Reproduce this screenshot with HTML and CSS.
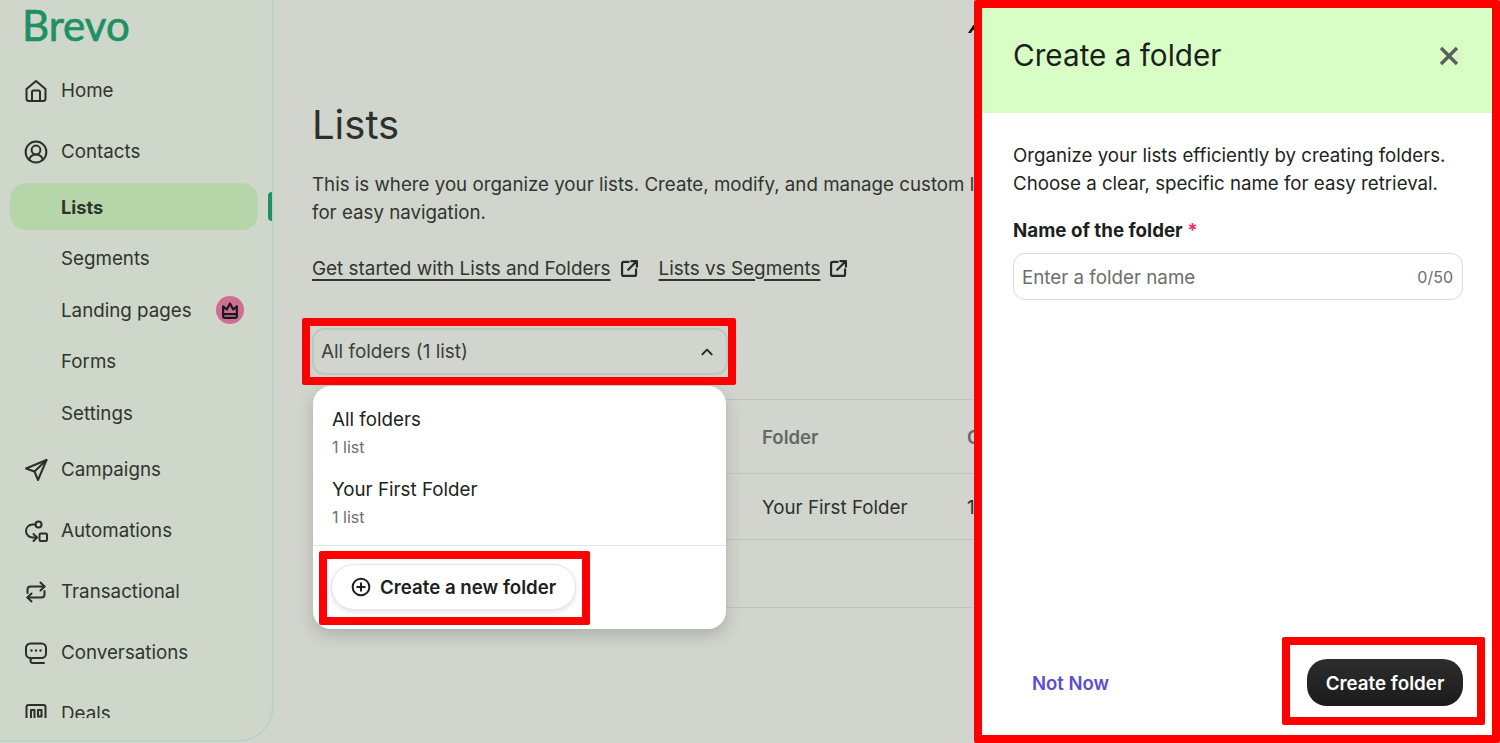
FILE: index.html
```html
<!DOCTYPE html>
<html lang="en">
<head>
<meta charset="utf-8">
<title>Brevo Lists</title>
<link rel="stylesheet" href="styles.css">
</head>
<body>
<div class="app">
  <aside class="sidebar">
    <div class="logo">Brevo</div>
    <nav class="nav">
      <a class="item"><svg class="ico" viewBox="0 0 24 24"><path d="M2.500 10 12 2l9.500 8v9.500a2.500 2.500 0 0 1-2.500 2.500H5a2.500 2.500 0 0 1-2.500-2.500z"/><path d="M8 22v-9a1.500 1.500 0 0 1 1.500-1.500h5A1.500 1.500 0 0 1 16 13v9"/></svg>Home</a>
      <a class="item item-contacts"><svg class="ico" viewBox="0 0 24 24"><circle cx="12" cy="12" r="10.400"/><circle cx="12" cy="10" r="4.400"/><path d="M5.200 19.800c.8-3.300 3.300-5.300 6.800-5.300s6 2 6.800 5.300"/></svg>Contacts</a>
      <div class="active-row"><a class="sub active">Lists</a><span class="marker"></span></div>
      <a class="sub">Segments</a>
      <a class="sub">Landing pages<span class="crown"><svg viewBox="0 0 24 24"><path d="M4.500 8v10.500a2 2 0 0 0 2 2h11a2 2 0 0 0 2-2V8l-4 3.500L12 5l-3.500 6.500z"/><path d="M4.500 16.500h15"/></svg></span></a>
      <a class="sub">Forms</a>
      <a class="sub">Settings</a>
      <a class="item"><svg class="ico" viewBox="0 0 24 24"><path d="M22.500 2 2 10.500l8.500 3 3.500 8.500z"/><path d="M22.500 2 10.500 13.500"/></svg>Campaigns</a>
      <a class="item"><svg class="ico" viewBox="0 0 24 24"><circle cx="14.500" cy="5.500" r="3"/><rect x="15.500" y="14.500" width="7.500" height="7.500" rx="1.200"/><path d="M11.500 5.500H8.500A6.500 6.500 0 0 0 2 12v0a6.500 6.500 0 0 0 7 6.500h3.500"/><path d="m9.500 15 3.500 3.500L9.500 22"/></svg>Automations</a>
      <a class="item"><svg class="ico" viewBox="0 0 24 24"><path d="M3.500 13V9.500a3 3 0 0 1 3-3h14"/><path d="m16.500 2.500 4 4-4 4"/><path d="M20.500 11v3.500a3 3 0 0 1-3 3h-14"/><path d="m7.500 13.500-4 4 4 4"/></svg>Transactional</a>
      <a class="item"><svg class="ico" viewBox="0 0 24 24"><path d="M7 17h-.500A4.500 4.500 0 0 1 2 12.500V7a4.500 4.500 0 0 1 4.500-4.500h11A4.500 4.500 0 0 1 22 7v5.500a4.500 4.500 0 0 1-4.500 4.500H9a2.500 2.500 0 0 0 0 5h11"/><path class="dots" d="M7.500 9.500h.01M12 9.500h.01M16.500 9.500h.01"/></svg>Conversations</a>
      <a class="item"><svg class="ico" viewBox="0 0 24 24"><rect x="2.500" y="3" width="19" height="20" rx="2"/><path d="M7 8h3.500v15H7zM14 8h3.500v6.500H14z"/></svg>Deals</a>
    </nav>
  </aside>

  <main class="main">
    <div class="topbar"><span class="account">A</span></div>
    <h1 class="title">Lists</h1>
    <p class="intro">This is where you organize your lists. Create, modify, and manage custom lists<br>for easy navigation.</p>
    <div class="links">
      <a class="link">Get started with Lists and Folders</a><svg class="ext" viewBox="0 0 24 24"><path d="M11 4.500H5.500a2 2 0 0 0-2 2v12a2 2 0 0 0 2 2h12a2 2 0 0 0 2-2V13"/><path d="M14 3.500h6.500V10M20.500 3.500 10.500 13.500"/></svg>
      <a class="link link-2">Lists vs Segments</a><svg class="ext" viewBox="0 0 24 24"><path d="M11 4.500H5.500a2 2 0 0 0-2 2v12a2 2 0 0 0 2 2h12a2 2 0 0 0 2-2V13"/><path d="M14 3.500h6.500V10M20.500 3.500 10.500 13.500"/></svg>
    </div>
    <div class="select">
      <span>All folders (1 list)</span>
      <svg class="chev" viewBox="0 0 24 24"><path d="m5 15.500 7-7 7 7"/></svg>
    </div>
    <div class="table">
      <div class="row head"><span class="c-folder">Folder</span><span>C</span></div>
      <div class="row body-row"><span class="c-folder">Your First Folder</span><span>1</span></div>
      <div class="row empty"></div>
    </div>

    <div class="menu">
      <div class="option"><div class="opt-name">All folders</div><div class="opt-sub">1 list</div></div>
      <div class="option"><div class="opt-name">Your First Folder</div><div class="opt-sub">1 list</div></div>
      <div class="menu-foot">
        <button class="new-btn"><svg viewBox="0 0 24 24"><circle cx="12" cy="12" r="10"/><path d="M12 7.500v9M7.500 12h9"/></svg>Create a new folder</button>
      </div>
    </div>
  </main>
</div>

<section class="panel">
  <header class="panel-head">
    <h2>Create a folder</h2>
    <svg class="close" viewBox="0 0 24 24"><path d="M4 4l16 16M20 4 4 20"/></svg>
  </header>
  <div class="panel-body">
    <p class="panel-text">Organize your lists efficiently by creating folders.<br>Choose a clear, specific name for easy retrieval.</p>
    <label class="field-label">Name of the folder <span class="req">*</span></label>
    <div class="input"><span class="ph">Enter a folder name</span><span class="count">0/50</span></div>
  </div>
  <footer class="panel-foot">
    <a class="notnow">Not Now</a>
    <button class="create">Create folder</button>
  </footer>
</section>

<div class="hl hl-select"></div>
<div class="hl hl-new"></div>
<div class="hl hl-panel"></div>
<div class="hl hl-create"></div>
</body>
</html>
```
FILE: styles.css
```css
* { box-sizing: border-box; }
html, body { margin: 0; height: 743px; overflow: hidden; }
body { font-family: Inter, "Liberation Sans", sans-serif; color: #2b312c; background: #d1d5ce; position: relative; }
.app { display: flex; height: 743px; }

.sidebar { width: 274px; height: 742px; flex: none; background: #cfd7ca; border-right: 2px solid #bdd2c6; border-bottom: 2px solid #bdd2c6; border-bottom-right-radius: 36px; padding: 0 0 0 10px; overflow: hidden; }
.logo { font-family: Lato, sans-serif; font-size: 42px; line-height: 50px; height: 60px; margin-left: 12px; color: #1f8f66; -webkit-text-stroke: 0.7px #1f8f66; }
.nav { height: 658px; overflow: hidden; display: flex; flex-direction: column; }
.item { display: flex; align-items: center; height: 61px; flex: none; padding-left: 14px; gap: 13px; font-size: 18.750px; color: #2f352f; }
.item-contacts { margin-bottom: 1px; }
.ico { width: 24px; height: 24px; flex: none; fill: none; stroke: #2a2f2a; stroke-width: 2; stroke-linecap: round; stroke-linejoin: round; }
.dots { stroke-width: 2.400; }
.sub { display: flex; align-items: center; height: 51.600px; flex: none; padding-left: 51px; font-size: 18.750px; color: #2f352f; }
.active-row { display: flex; align-items: center; gap: 10px; height: 47px; flex: none; margin-bottom: 3px; }
.active { width: 248px; height: 47px; background: #b6d5a8; border-radius: 16px; font-weight: 700; font-size: 18.300px; }
.marker { width: 6px; height: 29px; background: #1f8f66; border-radius: 6px 0 0 6px; }
.crown { width: 28px; height: 28px; border-radius: 50%; background: #cd6f92; display: flex; align-items: center; justify-content: center; margin-left: 24px; }
.crown svg { width: 22px; height: 22px; fill: none; stroke: #1a1a1a; stroke-width: 2.400; stroke-linejoin: round; }

.main { position: relative; flex: 1; padding-left: 38px; min-width: 0; overflow: hidden; }
.topbar { height: 97px; }
.account { position: absolute; left: 692px; top: 16px; font-size: 18px; line-height: 22px; font-weight: 700; color: #111; clip-path: inset(9px 0 0 0); transform: skewX(-18deg); transform-origin: left bottom; }
.title { margin: 0; font-size: 40px; font-weight: 400; line-height: 56px; color: #2b312c; }
.intro { margin: 18px 0 0; width: 800px; font-size: 18.730px; line-height: 28px; color: #2f352f; white-space: nowrap; }
.links { display: flex; align-items: center; margin-top: 27px; height: 28px; font-size: 18.900px; color: #2f352f; }
.link { text-decoration: underline; text-underline-offset: 4px; text-decoration-thickness: 1.500px; }
.link-2 { margin-left: 19px; }
.ext { width: 21px; height: 21px; margin-left: 8px; fill: none; stroke: #262b27; stroke-width: 2.500; stroke-linecap: round; stroke-linejoin: round; }
.select { margin-top: 46px; width: 416px; height: 47px; border: 2px solid #bcc7c0; border-radius: 12px; display: flex; align-items: center; justify-content: space-between; padding: 0 11px 0 7px; font-size: 18.900px; color: #3a403b; }
.chev { width: 16px; height: 16px; fill: none; stroke: #262b27; stroke-width: 3; stroke-linecap: round; stroke-linejoin: round; }
.table { margin-top: 24px; width: 800px; }
.row { border-top: 1px solid #bfc6bf; display: flex; align-items: center; font-size: 18.750px; }
.row .c-folder { width: 205px; margin-left: 450px; }
.head { height: 74px; font-weight: 600; font-size: 18.600px; color: #636a64; }
.body-row { height: 66px; padding-top: 2px; }
.empty { height: 69px; border-bottom: 1px solid #bfc6bf; }

.menu { position: absolute; left: 39px; top: 386px; width: 413px; height: 243px; background: #fff; border-radius: 18px; box-shadow: 0 6px 16px rgba(40,50,40,.22); }
.option { height: 70px; padding: 20px 0 0 19px; }
.opt-name { font-size: 18.750px; line-height: 28px; color: #202420; }
.opt-sub { font-size: 16px; line-height: 24px; color: #6c716c; margin-top: 1px; }
.menu-foot { margin-top: 19px; border-top: 1px solid #e5e7e5; padding: 18px 0 0 18px; }
.new-btn { display: flex; align-items: center; gap: 9px; width: 245px; height: 46px; padding: 0 0 0 19px; background: #fff; border: 1px solid #e4e6e4; border-radius: 23px; box-shadow: 0 2px 5px rgba(0,0,0,.12); font-family: inherit; font-size: 18.700px; font-weight: 600; color: #1d1f1d; }
.new-btn svg { width: 20px; height: 20px; fill: none; stroke: #1d1f1d; stroke-width: 2.400; stroke-linecap: round; }

.panel { position: absolute; left: 982px; top: 7px; width: 511px; height: 728px; background: #fff; display: flex; flex-direction: column; }
.panel-head { height: 106px; flex: none; background: #d8fec6; display: flex; align-items: center; justify-content: space-between; padding: 0 32px 8px 31px; }
.panel-head h2 { margin: 0 0 2px; font-size: 29.700px; font-weight: 400; color: #1c1f1c; }
.close { width: 24px; height: 24px; fill: none; stroke: #5b5f5b; stroke-width: 3.400; }
.panel-body { flex: 1; padding: 29px 30px 0 31px; }
.panel-text { margin: 0; font-size: 18.700px; line-height: 28px; color: #202420; white-space: nowrap; }
.field-label { display: block; margin-top: 19px; font-size: 18.750px; line-height: 28px; font-weight: 700; color: #1c1f1c; }
.req { color: #f0315c; }
.input { margin-top: 8px; height: 47px; border: 1px solid #d9dbd9; border-radius: 12px; display: flex; align-items: center; justify-content: space-between; padding: 0 9px 0 8px; }
.ph { font-size: 18.750px; color: #6b6f6b; margin-top: 2px; }
.count { font-size: 16px; color: #6b6f6b; }
.panel-foot { height: 105px; flex: none; display: flex; align-items: flex-start; justify-content: space-between; padding: 29px 30px 0 50px; }
.notnow { margin-top: 10px; font-size: 18.500px; line-height: 28px; font-weight: 600; color: #5b4fd0; }
.create { width: 156px; height: 47px; border: 0; border-radius: 20px; padding: 2px 0 0; background: linear-gradient(#2d2d2d, #1b1b1b); color: #fff; font-family: inherit; font-size: 18.800px; font-weight: 600; }

.hl { position: absolute; border: 8px solid #f00; border-radius: 2px; pointer-events: none; }
.hl-select { left: 302px; top: 318px; width: 434px; height: 67px; }
.hl-new { left: 319px; top: 551px; width: 271px; height: 74px; }
.hl-panel { left: 974px; top: 0; width: 526px; height: 743px; }
.hl-create { left: 1282px; top: 637px; width: 203px; height: 88px; }
```
